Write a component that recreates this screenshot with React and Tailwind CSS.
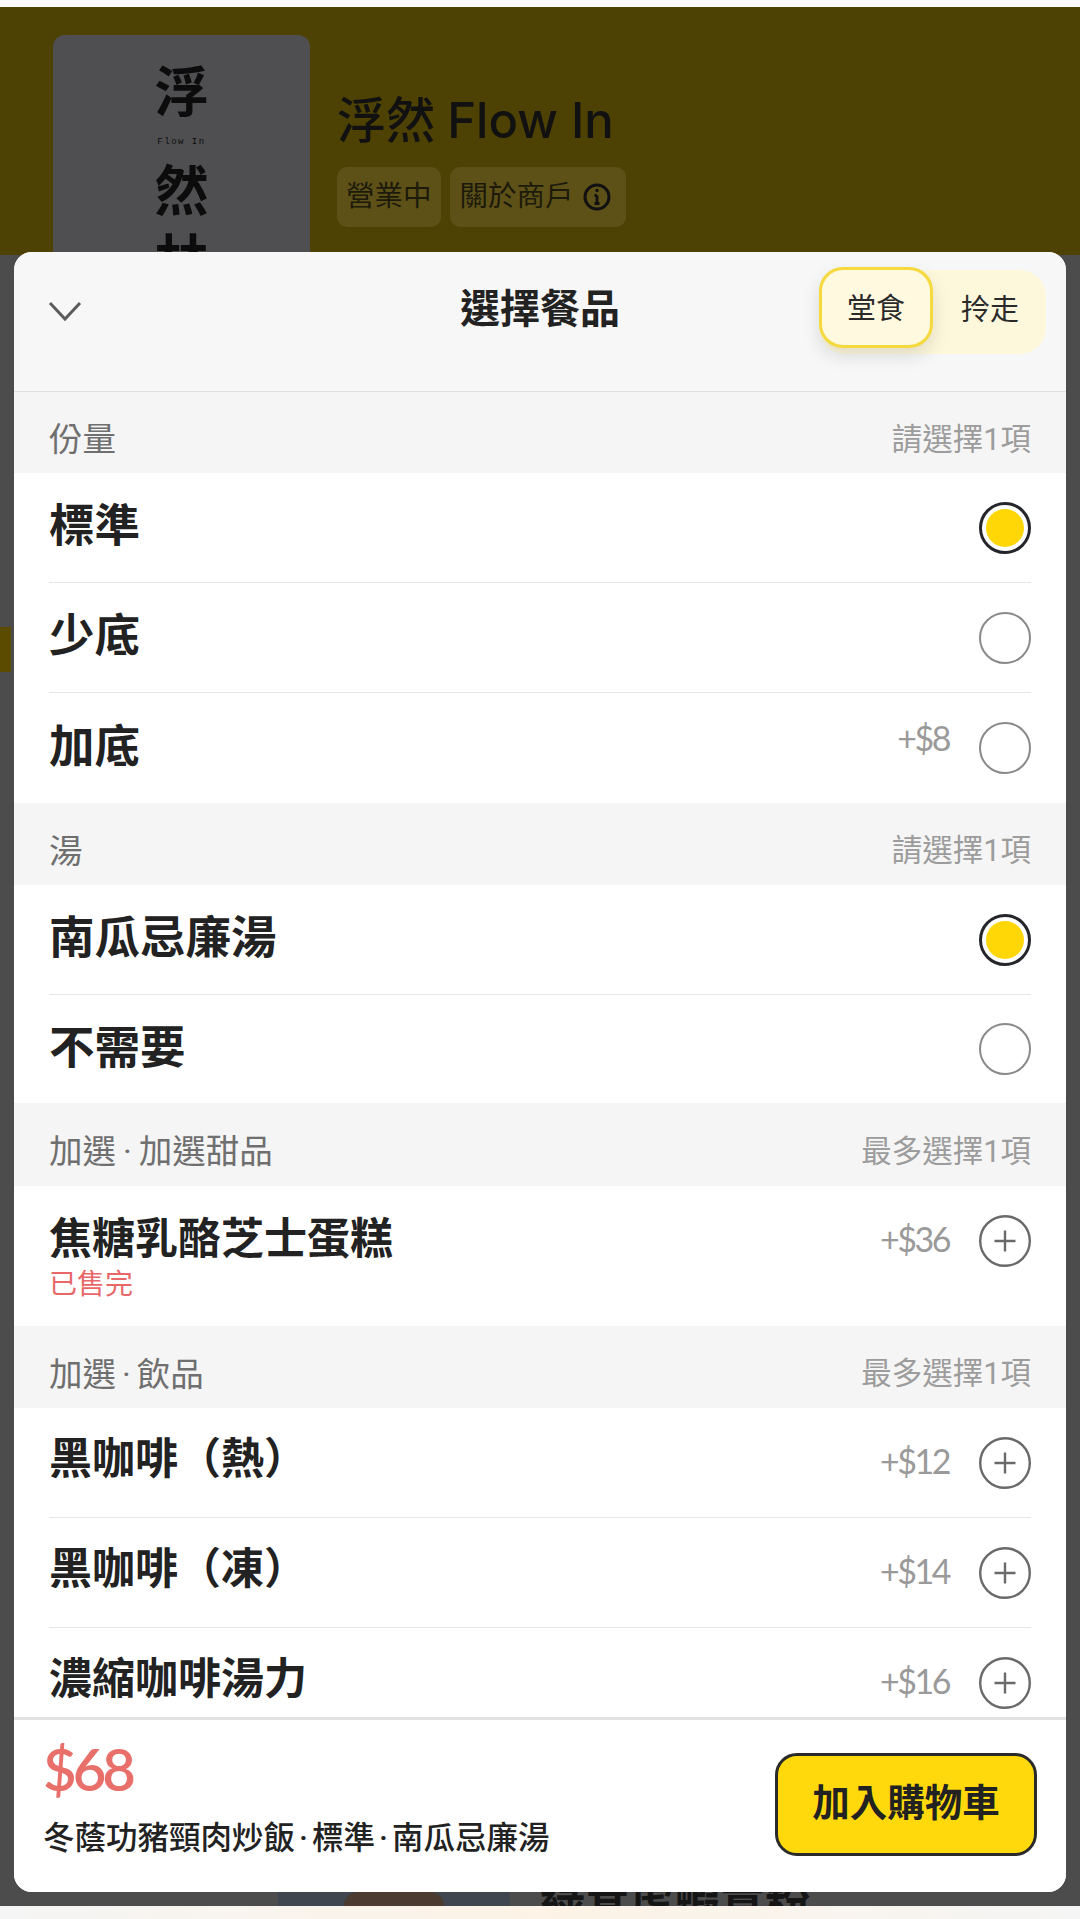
import React from "react";

const CJK = { fontFamily: 'Roboto,"Noto Sans CJK TC","Noto Sans",sans-serif' };
const PRICE = { fontFamily: 'Lato,"Noto Sans",sans-serif' };

function Radio({ on }) {
  return on ? (
    <span className="flex h-[52px] w-[52px] shrink-0 items-center justify-center rounded-full border-[3px] border-[#24262b] bg-white">
      <span className="h-[38px] w-[38px] rounded-full bg-[#ffd606]" />
    </span>
  ) : (
    <span className="h-[52px] w-[52px] shrink-0 rounded-full border-[2px] border-[#8a8a8a] bg-white" />
  );
}

function Plus() {
  return (
    <svg width="52" height="52" viewBox="0 0 52 52" className="shrink-0" fill="none" stroke="#6a6a6a" strokeWidth="2.4">
      <circle cx="26" cy="26" r="24.8" />
      <path d="M15.5 26H36.5M26 15.5V36.5" />
    </svg>
  );
}

function Section({ title, hint, h = "h-[82px]" }) {
  return (
    <div className={`flex ${h} items-center justify-between bg-[#f5f5f5] pl-[35px] pr-[35px] pt-[15px]`}>
      <span className="text-[33.5px] leading-none text-[#6f6f6f]">{title}</span>
      <span className="text-[30.5px] leading-none text-[#9c9c9c]">{hint}</span>
    </div>
  );
}

function RadioRow({ name, price, on, last, h = "h-[110px]" }) {
  return (
    <div className="bg-white pl-[35px] pr-[35px]">
      <div className={`flex ${h} items-center justify-between ${last ? "" : "border-b border-[#e6e6e6]"}`}>
        <span className="pb-[1px] text-[45.5px] font-bold leading-[50px] text-[#222]">{name}</span>
        <div className="flex items-center gap-[30px]">
          {price && (
            <span className="mb-[20px] text-[34px] leading-none tracking-[-2.5px] text-[#9a9a9a]" style={PRICE}>
              {price}
            </span>
          )}
          <Radio on={on} />
        </div>
      </div>
    </div>
  );
}

function PlusRow({ name, price }) {
  return (
    <div className="bg-white pl-[35px] pr-[35px]">
      <div className="flex h-[110px] items-center justify-between border-b border-[#e6e6e6]">
        <span className="pb-[7px] text-[43px] font-bold leading-[50px] text-[#222]">{name}</span>
        <div className="flex items-center gap-[30px]">
          <span className="mb-[4px] text-[34px] leading-none tracking-[-2.5px] text-[#9a9a9a]" style={PRICE}>
            {price}
          </span>
          <Plus />
        </div>
      </div>
    </div>
  );
}

function SoldOutRow({ name, sub, price }) {
  return (
    <div className="bg-white pl-[35px] pr-[35px]">
      <div className="flex h-[140px] items-start justify-between">
        <div className="flex flex-col pt-[28px]">
          <span className="text-[43px] font-bold leading-[50px] text-[#222]">{name}</span>
          <span className="mt-[4px] text-[28px] leading-[34px] text-[#e8686a]">{sub}</span>
        </div>
        <div className="flex items-center gap-[30px] pt-[29px]">
          <span className="mb-[4px] text-[34px] leading-none tracking-[-2.5px] text-[#9a9a9a]" style={PRICE}>
            {price}
          </span>
          <Plus />
        </div>
      </div>
    </div>
  );
}

export default function App() {
  return (
    <div className="relative h-[1919px] w-[1080px] overflow-hidden bg-[#4c4c4c]" style={CJK}>
      <div className="h-[7px] bg-[#fbfbfb]" />
      {/* dimmed merchant header */}
      <div className="flex h-[248px] overflow-hidden bg-[#4d4104] pl-[53px] pt-[28px]">
        <div className="flex h-[260px] w-[257px] flex-col items-center rounded-t-[12px] bg-[#4f4f52] pt-[29px] text-[#0c0c0c]">
          <span className="text-[54px] font-bold leading-[60px]">浮</span>
          <span className="mt-[12px] text-[9px] leading-[12px] tracking-[1.5px]" style={{ fontFamily: '"Liberation Mono",monospace' }}>Flow In</span>
          <span className="mt-[15px] text-[54px] font-bold leading-[60px]">然</span>
          <span className="mt-[9px] text-[54px] font-bold leading-[60px]">林</span>
        </div>
        <div className="ml-[27px] flex flex-col pt-[54px]">
          <span className="text-[49px] font-medium leading-[64px] text-[#111]">
            浮然 <span style={{ fontFamily: 'Inter,sans-serif' }}>Flow In</span>
          </span>
          <div className="mt-[13px] flex gap-[9px]">
            <span className="flex h-[60px] items-center rounded-[10px] bg-[#5e5118] px-[9px] text-[28.5px] text-[#1c1a0a]">營業中</span>
            <span className="flex h-[60px] items-center gap-[9px] rounded-[10px] bg-[#5e5118] pl-[10px] pr-[15px] text-[28.5px] text-[#1c1a0a]">
              關於商戶
              <svg width="28" height="28" viewBox="0 0 28 28" fill="none" stroke="#111" strokeWidth="3">
                <circle cx="14" cy="14" r="12" />
                <path d="M14 12.5V20M11.5 20.5H16.5M11.5 12.5H14" strokeWidth="2.8" />
                <circle cx="14" cy="7.5" r="1" fill="#111" strokeWidth="1.4" />
              </svg>
            </span>
          </div>
        </div>
      </div>
      {/* side stub */}
      <div className="mt-[372px] h-[45px] w-[11px] bg-[#5a4b00]" />
      {/* peek of next content */}
      <div className="absolute left-[278px] top-[1892px] flex h-[14px] w-[232px] justify-center bg-[#3f4650]">
        <div className="h-[14px] w-[100px] rounded-t-full bg-[#4a3a30]" />
      </div>
      <div className="absolute left-[540px] top-[1868px] h-[38px] overflow-hidden">
        <span className="mt-[10px] block text-[45px] font-bold leading-[50px] text-[#151515]">綠茸虎蝦意粉</span>
      </div>
      <div className="absolute bottom-0 left-0 right-0 h-[13px] bg-gradient-to-r from-[#f5f5f5] via-[#fdf3e6] to-[#f5f5f5]" />

      {/* bottom sheet */}
      <div className="absolute left-[14px] top-[252px] flex h-[1640px] w-[1052px] flex-col overflow-hidden rounded-[18px] bg-[#f5f5f5]">
        <div className="relative flex h-[140px] shrink-0 items-start justify-center border-b border-[#e0e0e0] bg-[#f7f7f7]">
          <svg className="absolute left-[34px] top-[48px]" width="34" height="22" viewBox="0 0 34 22" fill="none" stroke="#5c5c5c" strokeWidth="3">
            <path d="M2 3L17 19L32 3" />
          </svg>
          <span className="mt-[29px] text-[40px] font-bold leading-[58px] text-[#222]">選擇餐品</span>
          <div className="absolute left-[805px] top-[18px] flex h-[84px] w-[227px] items-center rounded-[26px] bg-[#fdf8dc]">
            <span className="absolute right-[27px] top-[20px] text-[29px] leading-[40px] text-[#2a2a2a]">拎走</span>
            <span className="absolute -top-[3px] left-0 flex h-[81px] w-[114px] items-center justify-center rounded-[24px] border-[3px] border-[#f6d93c] bg-[#fef9df] pt-[4px] text-[29px] text-[#2a2a2a] shadow-[0_8px_18px_rgba(0,0,0,0.12)]">堂食</span>
          </div>
        </div>
        <div className="flex-1 overflow-hidden">
          <Section title="份量" hint="請選擇1項" h="h-[81px]" />
          <RadioRow name="標準" on />
          <RadioRow name="少底" />
          <RadioRow name="加底" price="+$8" last />
          <Section title="湯" hint="請選擇1項" />
          <RadioRow name="南瓜忌廉湯" on />
          <RadioRow name="不需要" last h="h-[108px]" />
          <Section title={<>加選<span className="mx-[7px]">·</span>加選甜品</>} hint="最多選擇1項" h="h-[83px]" />
          <SoldOutRow name="焦糖乳酪芝士蛋糕" sub="已售完" price="+$36" />
          <Section title={<>加選<span className="mx-[6px]">·</span>飲品</>} hint="最多選擇1項" />
          <PlusRow name="黑咖啡（熱）" price="+$12" />
          <PlusRow name="黑咖啡（凍）" price="+$14" />
          <PlusRow name="濃縮咖啡湯力" price="+$16" />
        </div>
        <div className="flex h-[175px] shrink-0 items-center justify-between border-t-[3px] border-[#e3e3e3] bg-white pl-[29px] pr-[29px]">
          <div className="mb-[17px] flex flex-col">
            <span className="text-[58px] font-semibold leading-[70px] tracking-[-4px] text-[#e86f6a]" style={PRICE}>$68</span>
            <span className="mt-[13px] text-[31.5px] font-medium leading-[44px] text-[#222]">
              冬蔭功豬頸肉炒飯<span className="mx-[4px]">·</span>標準<span className="mx-[4px]">·</span>南瓜忌廉湯
            </span>
          </div>
          <button className="mb-[4px] flex h-[103px] w-[262px] items-center justify-center rounded-[22px] border-[3px] border-[#2a2a2a] bg-[#ffd90b] pb-[2px] text-[37.5px] font-bold text-[#222]">
            加入購物車
          </button>
        </div>
      </div>
    </div>
  );
}
